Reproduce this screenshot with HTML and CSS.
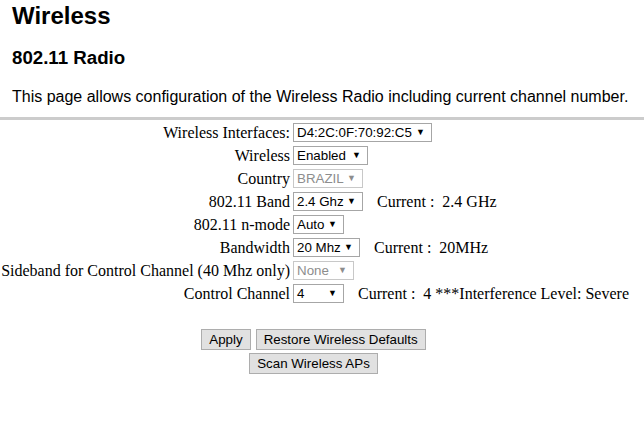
FILE: index.html
```html
<!DOCTYPE html>
<html>
<head>
<meta charset="utf-8">
<link rel="stylesheet" href="styles.css">
</head>
<body>
<div class="head">
  <h1 class="title">Wireless</h1>
  <h2 class="subtitle">802.11 Radio</h2>
  <p class="intro">This page allows configuration of the Wireless Radio including current channel number.</p>
</div>
<div class="rule"></div>
<div class="form">
  <div class="row"><span class="label">Wireless Interfaces:</span><span class="field"><span class="sel w-mac"><span class="val">D4:2C:0F:70:92:C5</span><span class="arr">▼</span></span></span></div>
  <div class="row"><span class="label">Wireless</span><span class="field"><span class="sel w-en"><span class="val">Enabled</span><span class="arr">▼</span></span></span></div>
  <div class="row"><span class="label">Country</span><span class="field"><span class="sel w-br dis"><span class="val">BRAZIL</span><span class="arr">▼</span></span></span></div>
  <div class="row"><span class="label">802.11 Band</span><span class="field"><span class="sel w-br"><span class="val">2.4 Ghz</span><span class="arr">▼</span></span><span class="cur">Current :&nbsp; 2.4 GHz</span></span></div>
  <div class="row"><span class="label">802.11 n-mode</span><span class="field"><span class="sel w-auto"><span class="val">Auto</span><span class="arr">▼</span></span></span></div>
  <div class="row"><span class="label">Bandwidth</span><span class="field"><span class="sel w-20"><span class="val">20 Mhz</span><span class="arr">▼</span></span><span class="cur">Current :&nbsp; 20MHz</span></span></div>
  <div class="row"><span class="label">Sideband for Control Channel (40 Mhz only)</span><span class="field"><span class="sel w-none dis"><span class="val">None</span><span class="arr">▼</span></span></span></div>
  <div class="row"><span class="label">Control Channel</span><span class="field"><span class="sel w-auto"><span class="val">4</span><span class="arr">▼</span></span><span class="cur cur-ch">Current :&nbsp; 4 ***Interference Level: Severe</span></span></div>
</div>
<div class="actions">
  <div class="btnrow"><button class="btn">Apply</button><button class="btn">Restore Wireless Defaults</button></div>
  <div class="btnrow"><button class="btn">Scan Wireless APs</button></div>
</div>
</body>
</html>
```
FILE: styles.css
```css
html, body {
  margin: 0;
  padding: 0;
  background: #fff;
  color: #000;
}
.head {
  padding-left: 12px;
  font-family: "Liberation Sans", Arial, sans-serif;
}
.title {
  margin: 0;
  padding-top: 2px;
  font-size: 24px;
  line-height: 28px;
  font-weight: bold;
}
.subtitle {
  margin: 0;
  padding-top: 17px;
  font-size: 18.7px;
  line-height: 22px;
  font-weight: bold;
}
.intro {
  margin: 0;
  padding-top: 18px;
  font-size: 16px;
  line-height: 19px;
}
.rule {
  margin-top: 11px;
  height: 3px;
  background: #cccccc;
}
.form {
  padding-top: 1px;
  font-family: "Liberation Serif", "Times New Roman", serif;
  font-size: 16px;
}
.row {
  display: grid;
  grid-template-columns: 290px 1fr;
  column-gap: 3px;
  height: 23px;
  align-items: center;
}
.label {
  text-align: right;
  white-space: nowrap;
}
.field {
  display: flex;
  align-items: center;
}
.sel {
  box-sizing: border-box;
  height: 19px;
  border: 1px solid #a6a6a6;
  background: #fff;
  display: flex;
  align-items: center;
  justify-content: space-between;
  padding: 0 6px 0 3px;
  font-family: "Liberation Sans", Arial, sans-serif;
  font-size: 13.33px;
  color: #000;
}
.sel .arr {
  font-size: 9px;
  line-height: 1;
}
.sel.dis {
  color: #8d8d8d;
  border-color: #c8c8c8;
}
.sel.dis .arr { color: #8d8d8d; }
.w-mac { width: 139px; }
.w-en { width: 75px; }
.w-br { width: 70px; }
.w-auto { width: 51px; }
.w-20 { width: 67px; }
.w-none { width: 61px; }
.cur {
  margin-left: 14px;
  white-space: nowrap;
}
.actions {
  width: 627px;
  padding-top: 24px;
  display: flex;
  flex-direction: column;
  align-items: center;
  gap: 3px;
}
.btnrow {
  display: flex;
  gap: 5px;
}
.btn {
  box-sizing: border-box;
  height: 21px;
  margin: 0;
  padding: 0 7px;
  font-family: "Liberation Sans", Arial, sans-serif;
  font-size: 13.33px;
  color: #000;
  background: #e1e1e1;
  border: 1px solid #adadad;
  border-radius: 0;
}
```
